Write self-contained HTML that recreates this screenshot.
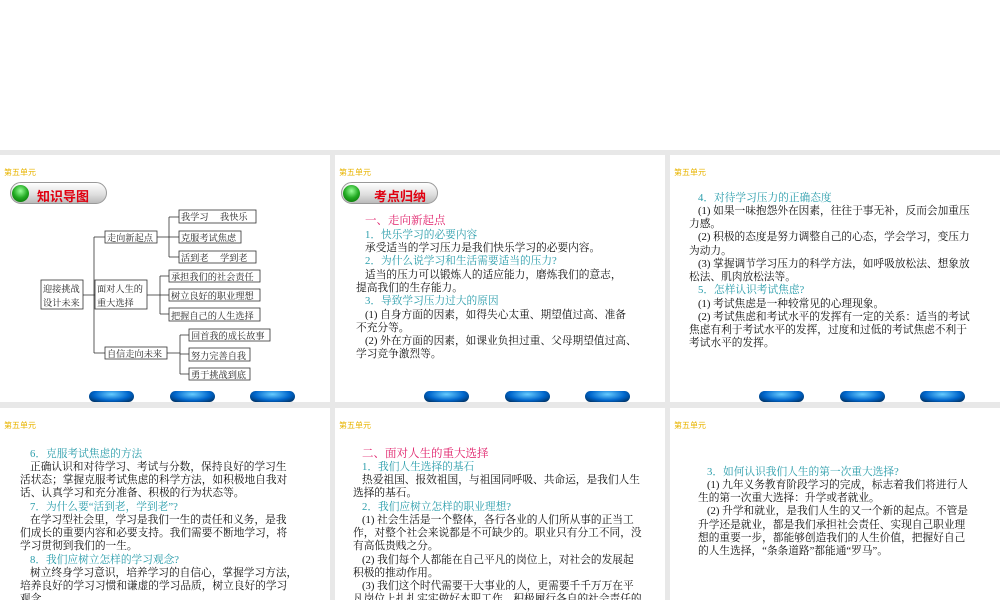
<!DOCTYPE html>
<html><head><meta charset="utf-8"><style>
*{margin:0;padding:0;box-sizing:border-box}
body{width:1000px;height:600px;overflow:hidden;background:#e8e8e8;position:relative;font-family:"Liberation Serif","Noto Serif CJK SC",serif}
.top{position:absolute;left:0;top:0;width:1000px;height:150px;background:#fff}
.s{position:absolute;background:#fff;overflow:hidden}
.u{position:absolute;font-size:8px;color:#e8b400;font-family:"Liberation Sans","Noto Sans CJK SC",sans-serif}
.l{position:absolute;white-space:nowrap;font-size:10.7px;line-height:13px;color:#111}
.t{color:#2a9dab}
.p{color:#e0206a;font-size:11.5px}
.pill{position:absolute;width:97px;height:22px;border:1px solid #999;border-radius:11px;background:linear-gradient(#fff,#ddd 60%,#bbb)}
.pill i{position:absolute;left:1px;top:2px;width:17px;height:17px;border-radius:50%;background:radial-gradient(circle at 50% 35%,#9f9,#2a2 50%,#060)}
.pill b{position:absolute;left:26px;top:3px;font-size:13px;font-weight:600;color:#e00010;font-family:"Liberation Sans","Noto Sans CJK SC",sans-serif}
.btn{position:absolute;width:45px;height:11px;border-radius:6px;background:radial-gradient(ellipse at 50% 30%,#6cf,#06c 55%,#024 100%)}
</style></head><body>
<div class="top"></div>

<!-- slide 1 -->
<div class="s" style="left:0;top:155px;width:330px;height:247px">
<div class="u" style="left:4px;top:12px">第五单元</div>
<div class="pill" style="left:10px;top:27px"><i></i><b>知识导图</b></div>
<svg style="position:absolute;left:0;top:-155px" width="330" height="402" font-family="Liberation Serif,Noto Serif CJK SC,serif" font-size="9.2" fill="#222">
<g stroke="#333" stroke-width="0.8" fill="none">
<line x1="83" y1="295" x2="95" y2="295"/><line x1="94" y1="237" x2="94" y2="353"/>
<line x1="94" y1="237" x2="105" y2="237"/><line x1="94" y1="353" x2="105" y2="353"/>
<line x1="157" y1="237" x2="169" y2="237"/><line x1="169" y1="217" x2="169" y2="257"/>
<line x1="169" y1="217" x2="179" y2="217"/><line x1="169" y1="257" x2="179" y2="257"/><line x1="169" y1="237" x2="179" y2="237"/>
<line x1="147" y1="295" x2="160" y2="295"/><line x1="160" y1="276" x2="160" y2="314"/>
<line x1="160" y1="276" x2="169" y2="276"/><line x1="160" y1="314" x2="169" y2="314"/><line x1="160" y1="295" x2="169" y2="295"/>
<line x1="167" y1="353" x2="180" y2="353"/><line x1="180" y1="335" x2="180" y2="374"/>
<line x1="180" y1="335" x2="189" y2="335"/><line x1="180" y1="374" x2="189" y2="374"/><line x1="180" y1="354" x2="189" y2="354"/>
</g>
<g stroke="#333" stroke-width="0.8" fill="#fff">
<rect x="41" y="280" width="42" height="29"/><rect x="95" y="280" width="52" height="29"/>
<rect x="105" y="231" width="52" height="12"/><rect x="105" y="347" width="62" height="12"/>
<rect x="179" y="210" width="77" height="13"/><rect x="179" y="231" width="62" height="12"/><rect x="179" y="251" width="77" height="12"/>
<rect x="169" y="270" width="91" height="12"/><rect x="169" y="289" width="91" height="12"/><rect x="169" y="308" width="91" height="13"/>
<rect x="189" y="329" width="81" height="12"/><rect x="189" y="348" width="61" height="13"/><rect x="189" y="368" width="61" height="12"/>
</g>
<text x="43" y="292">迎接挑战</text><text x="43" y="306">设计未来</text>
<text x="97" y="292">面对人生的</text><text x="97" y="306">重大选择</text>
<text x="107" y="241">走向新起点</text><text x="107" y="357">自信走向未来</text>
<text x="181" y="220">我学习　 我快乐</text><text x="181" y="241">克服考试焦虑</text><text x="181" y="261">活到老　 学到老</text>
<text x="171" y="280">承担我们的社会责任</text><text x="171" y="299">树立良好的职业理想</text><text x="171" y="319">把握自己的人生选择</text>
<text x="191" y="339">回首我的成长故事</text><text x="191" y="359">努力完善自我</text><text x="191" y="378">勇于挑战到底</text>
</svg>
<div class="btn" style="left:89px;top:236px"></div><div class="btn" style="left:170px;top:236px"></div><div class="btn" style="left:250px;top:236px"></div>
</div>

<!-- slide 2 -->
<div class="s" style="left:335px;top:155px;width:330px;height:247px">
<div class="u" style="left:4px;top:12px">第五单元</div>
<div class="pill" style="left:6px;top:27px"><i></i><b style="left:32px">考点归纳</b></div>
<div class="l p" style="left:30px;top:60px">一、走向新起点</div>
<div class="l t" style="left:30px;top:74px">1．快乐学习的必要内容</div>
<div class="l" style="left:30px;top:87px">承受适当的学习压力是我们快乐学习的必要内容。</div>
<div class="l t" style="left:30px;top:100px">2．为什么说学习和生活需要适当的压力?</div>
<div class="l" style="left:30px;top:114px">适当的压力可以锻炼人的适应能力，磨炼我们的意志，</div>
<div class="l" style="left:21px;top:127px">提高我们的生存能力。</div>
<div class="l t" style="left:30px;top:140px">3．导致学习压力过大的原因</div>
<div class="l" style="left:30px;top:154px">(1) 自身方面的因素，如得失心太重、期望值过高、准备</div>
<div class="l" style="left:21px;top:167px">不充分等。</div>
<div class="l" style="left:30px;top:180px">(2) 外在方面的因素，如课业负担过重、父母期望值过高、</div>
<div class="l" style="left:21px;top:193px">学习竞争激烈等。</div>
<div class="btn" style="left:89px;top:236px"></div><div class="btn" style="left:170px;top:236px"></div><div class="btn" style="left:250px;top:236px"></div>
</div>

<!-- slide 3 -->
<div class="s" style="left:670px;top:155px;width:330px;height:247px">
<div class="u" style="left:4px;top:12px">第五单元</div>
<div class="l t" style="left:28px;top:37px">4．对待学习压力的正确态度</div>
<div class="l" style="left:28px;top:50px">(1) 如果一味抱怨外在因素，往往于事无补，反而会加重压</div>
<div class="l" style="left:19px;top:63px">力感。</div>
<div class="l" style="left:28px;top:76px">(2) 积极的态度是努力调整自己的心态，学会学习，变压力</div>
<div class="l" style="left:19px;top:90px">为动力。</div>
<div class="l" style="left:28px;top:103px">(3) 掌握调节学习压力的科学方法，如呼吸放松法、想象放</div>
<div class="l" style="left:19px;top:116px">松法、肌肉放松法等。</div>
<div class="l t" style="left:28px;top:129px">5．怎样认识考试焦虑?</div>
<div class="l" style="left:28px;top:143px">(1) 考试焦虑是一种较常见的心理现象。</div>
<div class="l" style="left:28px;top:156px">(2) 考试焦虑和考试水平的发挥有一定的关系：适当的考试</div>
<div class="l" style="left:19px;top:169px">焦虑有利于考试水平的发挥，过度和过低的考试焦虑不利于</div>
<div class="l" style="left:19px;top:182px">考试水平的发挥。</div>
<div class="btn" style="left:89px;top:236px"></div><div class="btn" style="left:170px;top:236px"></div><div class="btn" style="left:250px;top:236px"></div>
</div>

<!-- slide 4 -->
<div class="s" style="left:0;top:408px;width:330px;height:192px">
<div class="u" style="left:4px;top:12px">第五单元</div>
<div class="l t" style="left:30px;top:40px">6．克服考试焦虑的方法</div>
<div class="l" style="left:30px;top:53px">正确认识和对待学习、考试与分数，保持良好的学习生</div>
<div class="l" style="left:20px;top:66px">活状态；掌握克服考试焦虑的科学方法，如积极地自我对</div>
<div class="l" style="left:20px;top:79px">话、认真学习和充分准备、积极的行为状态等。</div>
<div class="l t" style="left:30px;top:93px">7．为什么要“活到老，学到老”?</div>
<div class="l" style="left:30px;top:106px">在学习型社会里，学习是我们一生的责任和义务，是我</div>
<div class="l" style="left:20px;top:119px">们成长的重要内容和必要支持。我们需要不断地学习，将</div>
<div class="l" style="left:20px;top:132px">学习贯彻到我们的一生。</div>
<div class="l t" style="left:30px;top:146px">8．我们应树立怎样的学习观念?</div>
<div class="l" style="left:30px;top:159px">树立终身学习意识，培养学习的自信心，掌握学习方法，</div>
<div class="l" style="left:20px;top:172px">培养良好的学习习惯和谦虚的学习品质，树立良好的学习</div>
<div class="l" style="left:20px;top:185px">观念。</div>
</div>

<!-- slide 5 -->
<div class="s" style="left:335px;top:408px;width:330px;height:192px">
<div class="u" style="left:4px;top:12px">第五单元</div>
<div class="l p" style="left:27px;top:40px">二、面对人生的重大选择</div>
<div class="l t" style="left:27px;top:53px">1．我们人生选择的基石</div>
<div class="l" style="left:27px;top:66px">热爱祖国、报效祖国，与祖国同呼吸、共命运，是我们人生</div>
<div class="l" style="left:18px;top:79px">选择的基石。</div>
<div class="l t" style="left:27px;top:93px">2．我们应树立怎样的职业理想?</div>
<div class="l" style="left:27px;top:106px">(1) 社会生活是一个整体，各行各业的人们所从事的正当工</div>
<div class="l" style="left:18px;top:119px">作，对整个社会来说都是不可缺少的。职业只有分工不同，没</div>
<div class="l" style="left:18px;top:132px">有高低贵贱之分。</div>
<div class="l" style="left:27px;top:146px">(2) 我们每个人都能在自己平凡的岗位上，对社会的发展起</div>
<div class="l" style="left:18px;top:159px">积极的推动作用。</div>
<div class="l" style="left:27px;top:172px">(3) 我们这个时代需要干大事业的人，更需要千千万万在平</div>
<div class="l" style="left:18px;top:185px">凡岗位上扎扎实实做好本职工作，积极履行各自的社会责任的</div>
</div>

<!-- slide 6 -->
<div class="s" style="left:670px;top:408px;width:330px;height:192px">
<div class="u" style="left:4px;top:12px">第五单元</div>
<div class="l t" style="left:37px;top:58px">3．如何认识我们人生的第一次重大选择?</div>
<div class="l" style="left:37px;top:71px">(1) 九年义务教育阶段学习的完成，标志着我们将进行人</div>
<div class="l" style="left:28px;top:84px">生的第一次重大选择：升学或者就业。</div>
<div class="l" style="left:37px;top:97px">(2) 升学和就业，是我们人生的又一个新的起点。不管是</div>
<div class="l" style="left:28px;top:111px">升学还是就业，都是我们承担社会责任、实现自己职业理</div>
<div class="l" style="left:28px;top:124px">想的重要一步，都能够创造我们的人生价值，把握好自己</div>
<div class="l" style="left:28px;top:137px">的人生选择，“条条道路”都能通“罗马”。</div>
</div>
</body></html>
